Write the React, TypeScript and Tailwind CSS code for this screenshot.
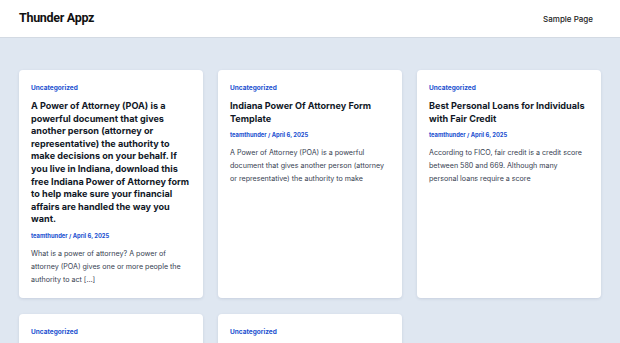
const posts = [
  {
    title:
      'A Power of Attorney (POA) is a powerful document that gives another person (attorney or representative) the authority to make decisions on your behalf. If you live in Indiana, download this free Indiana Power of Attorney form to help make sure your financial affairs are handled the way you want.',
    excerpt: 'What is a power of attorney? A power of attorney (POA) gives one or more people the authority to act […]',
  },
  {
    title: 'Indiana Power Of Attorney Form Template',
    excerpt: 'A Power of Attorney (POA) is a powerful document that gives another person (attorney or representative) the authority to make',
  },
  {
    title: 'Best Personal Loans for Individuals with Fair Credit',
    excerpt: 'According to FICO, fair credit is a credit score between 580 and 669. Although many\npersonal loans require a score',
  },
  { title: 'Lorem', excerpt: '' },
  { title: 'Lorem', excerpt: '' },
]

function PostCard({ title, excerpt }: { title: string; excerpt: string }) {
  return (
    <article className="rounded-[4px] bg-white px-3 pt-[13px] pb-[12px] shadow-[0_1px_3px_rgba(30,50,90,0.12)]">
      <a className="block text-[6.5px] font-bold leading-[10px] text-[#1a4fd0]">Uncategorized</a>
      <h2 className="mt-[7px] text-[9.1px] font-bold leading-[12.6px] text-[#111827]">{title}</h2>
      <div className="mt-[5px] text-[5.8px] font-bold leading-[10px] text-[#1a4fd0]">teamthunder / April 6, 2025</div>
      <p className="mt-[6px] whitespace-pre-line text-[7.12px] leading-[13px] text-[#374151]">{excerpt}</p>
    </article>
  )
}

export default function App() {
  return (
    <div className="min-h-[343px] bg-[#dfe7f1] font-['Inter',sans-serif]">
      <header className="flex h-[38px] items-center justify-between border-b border-[#d3dae3] bg-white px-[19px]">
        <div className="font-['Roboto',sans-serif] text-[12.5px] font-bold tracking-[-0.3px] text-[#111]">Thunder Appz</div>
        <nav className="pr-[8px] text-[8px] font-medium text-[#222]">Sample Page</nav>
      </header>
      <main className="grid grid-cols-3 gap-x-[15px] gap-y-4 px-[19px] pt-[32px]">
        {posts.map((p, i) => (
          <PostCard key={i} title={p.title} excerpt={p.excerpt} />
        ))}
      </main>
    </div>
  )
}
